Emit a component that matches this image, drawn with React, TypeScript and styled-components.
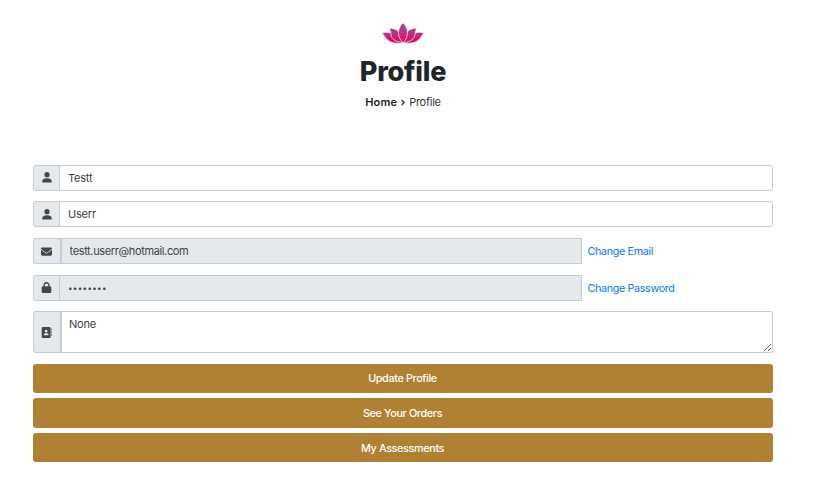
import React from "react";
import styled, { createGlobalStyle, css } from "styled-components";
import { FaEnvelope, FaLock, FaAddressBook } from "react-icons/fa6";

const GlobalStyle = createGlobalStyle`
  *, *::before, *::after { box-sizing: border-box; }
  body {
    margin: 0;
    background: #fff;
    color: #495057;
    font-family: Inter, "Liberation Sans", sans-serif;
    font-size: 11px;
  }
`;

const Page = styled.main`
  height: 493px;
  padding: 22px 54px 0 33px;
`;

const Header = styled.header`
  display: flex;
  flex-direction: column;
  align-items: center;
  height: 143px;
`;

const Lotus = styled.svg`
  display: block;
  width: 42px;
  height: 22px;
`;

const Title = styled.h1`
  margin: 8px 0 0;
  color: #212529;
  font-size: 27px;
  font-weight: 800;
  line-height: 40px;
  letter-spacing: -0.2px;
`;

const Breadcrumb = styled.nav`
  display: flex;
  align-items: center;
  gap: 4px;
  margin-top: 2px;
  color: #212529;
  line-height: 16px;
`;

const Home = styled.a`
  font-weight: 600;
  letter-spacing: 0.15px;
`;

const Current = styled.span`
  color: #33383c;
  letter-spacing: -0.25px;
`;

const Chevron = styled.svg`
  width: 4px;
  height: 7px;
`;

const Form = styled.form`
  display: grid;
  grid-template-rows: 36px 37px 37px 36px 42px;
  align-items: start;
`;

const Row = styled.div<{ $tall?: boolean }>`
  display: flex;
  min-width: 0;
  height: ${(p) => (p.$tall ? 42 : 26)}px;
`;

const IconBox = styled.span<{ $separate?: boolean; $lift?: number }>`
  display: flex;
  flex: none;
  align-items: center;
  justify-content: center;
  width: 27px;
  margin-right: ${(p) => (p.$separate ? 1 : 0)}px;
  padding-bottom: ${(p) => p.$lift ?? 0}px;
  border: 1px solid #c5ccd3;
  border-width: ${(p) => (p.$separate ? "1px 0 1px 1px" : "1px")};
  padding-right: ${(p) => (p.$separate ? 1 : 0)}px;
  box-shadow: ${(p) => (p.$separate ? "1px 0 #c5ccd3" : "none")};
  border-radius: 3px 0 0 3px;
  background: #e5e9ec;
  color: #40474d;
  font-size: 11px;
`;

const PersonSvg = styled.svg`
  width: 10px;
  height: 11px;
  fill: currentColor;
`;

const Person = () => (
  <PersonSvg viewBox="0 0 10 11" aria-hidden="true">
    <circle cx="5" cy="2.700" r="2.600" />
    <path d="M.2 9.700C.2 7.400 2 6.300 5 6.300S9.800 7.400 9.800 9.700Q9.800 10.600 9 10.600H1Q.2 10.600.2 9.700Z" />
  </PersonSvg>
);

const field = css`
  min-width: 0;
  margin: 0 0 0 -1px;
  border: 1px solid #c5ccd3;
  background: #fff;
  color: #3b4248;
  font-family: inherit;
  font-size: 11px;
  letter-spacing: -0.2px;
  outline: none;
`;

const Input = styled.input<{ $dots?: boolean }>`
  ${field}
  flex: 1;
  padding: 0 8px;
  border-radius: 0 3px 3px 0;
  &:read-only {
    flex: 0 0 ${(p) => (p.$dots ? 523 : 522)}px;
    background: #e5e9ec;
    border-radius: 0;
    letter-spacing: ${(p) => (p.$dots ? "0.35px" : "-0.36px")};
    font-size: ${(p) => (p.$dots ? 8 : 11)}px;
  }
`;

const EmailInput = styled(Input)`
  border-left-width: 2px;
  padding-left: 7.5px;
`;

const Address = styled.textarea`
  ${field}
  flex: 1;
  padding: 5px 7px;
  border-left-width: 2px;
  border-radius: 0 3px 3px 0;
  line-height: 15px;
  resize: vertical;
`;

const ChangeLink = styled.a`
  align-self: center;
  margin-left: 5.6px;
  color: #087bf5;
  font-size: 10.8px;
  letter-spacing: -0.38px;
`;

const Actions = styled.div`
  display: grid;
  grid-template-rows: 29px 30px 29px;
  row-gap: 5px;
  margin-top: 11px;
`;

const Button = styled.button`
  padding: 0 1px 0 0;
  border: 0;
  border-radius: 3px;
  background: #b08133;
  color: #fff;
  font-family: inherit;
  font-size: 10.8px;
  font-weight: 500;
  letter-spacing: -0.35px;

  &:last-child {
    padding-top: 1px;
  }
`;

export default function App() {
  return (
    <>
      <GlobalStyle />
      <Page>
        <Header>
          <Lotus viewBox="0 0 42 22" aria-hidden="true">
            <defs>
              <linearGradient id="petal" x1="0" y1="1" x2="0" y2="21" gradientUnits="userSpaceOnUse">
                <stop offset="0" stopColor="#8f5096" />
                <stop offset="0.5" stopColor="#bb347e" />
                <stop offset="1" stopColor="#e6055d" />
              </linearGradient>
            </defs>
            <g fill="url(#petal)" stroke="#fff" strokeWidth="0.7">
              <path d="M0 10.700Q9 9 14.500 14.500L20.500 21C13 22 7 20.500 4 16.500Q2 13.500 0 10.700Z" />
              <path d="M42 10.700Q33 9 27.500 14.500L21.500 21C29 22 35 20.500 38 16.500Q40 13.500 42 10.700Z" />
              <path d="M7.200 6.200C14 6 20.500 10 20.800 21C13 19.500 9.500 17 9 12.500Q8.800 9 7.200 6.200Z" />
              <path d="M34.800 6.200C28 6 21.500 10 21.200 21C29 19.500 32.500 17 33 12.500Q33.200 9 34.800 6.200Z" />
              <path d="M21 .8C26.500 6 27.500 14 21 21C14.500 14 15.500 6 21 .8Z" />
            </g>
          </Lotus>
          <Title>Profile</Title>
          <Breadcrumb>
            <Home>Home</Home>
            <Chevron viewBox="0 0 4 7" aria-hidden="true">
              <path d="M.6.9 3.200 3.500.6 6.100" fill="none" stroke="#212529" strokeWidth="1.300" />
            </Chevron>
            <Current>Profile</Current>
          </Breadcrumb>
        </Header>
        <Form>
          <Row>
            <IconBox $lift={2}><Person /></IconBox>
            <Input defaultValue="Testt" />
          </Row>
          <Row>
            <IconBox><Person /></IconBox>
            <Input defaultValue="Userr" />
          </Row>
          <Row>
            <IconBox $separate><FaEnvelope /></IconBox>
            <EmailInput readOnly defaultValue="testt.userr@hotmail.com" />
            <ChangeLink>Change Email</ChangeLink>
          </Row>
          <Row>
            <IconBox $lift={2}><FaLock /></IconBox>
            <Input $dots readOnly defaultValue="••••••••" />
            <ChangeLink>Change Password</ChangeLink>
          </Row>
          <Row $tall>
            <IconBox $separate><FaAddressBook /></IconBox>
            <Address defaultValue="None" />
          </Row>
        </Form>
        <Actions>
          <Button type="button">Update Profile</Button>
          <Button type="button">See Your Orders</Button>
          <Button type="button">My Assessments</Button>
        </Actions>
      </Page>
    </>
  );
}
